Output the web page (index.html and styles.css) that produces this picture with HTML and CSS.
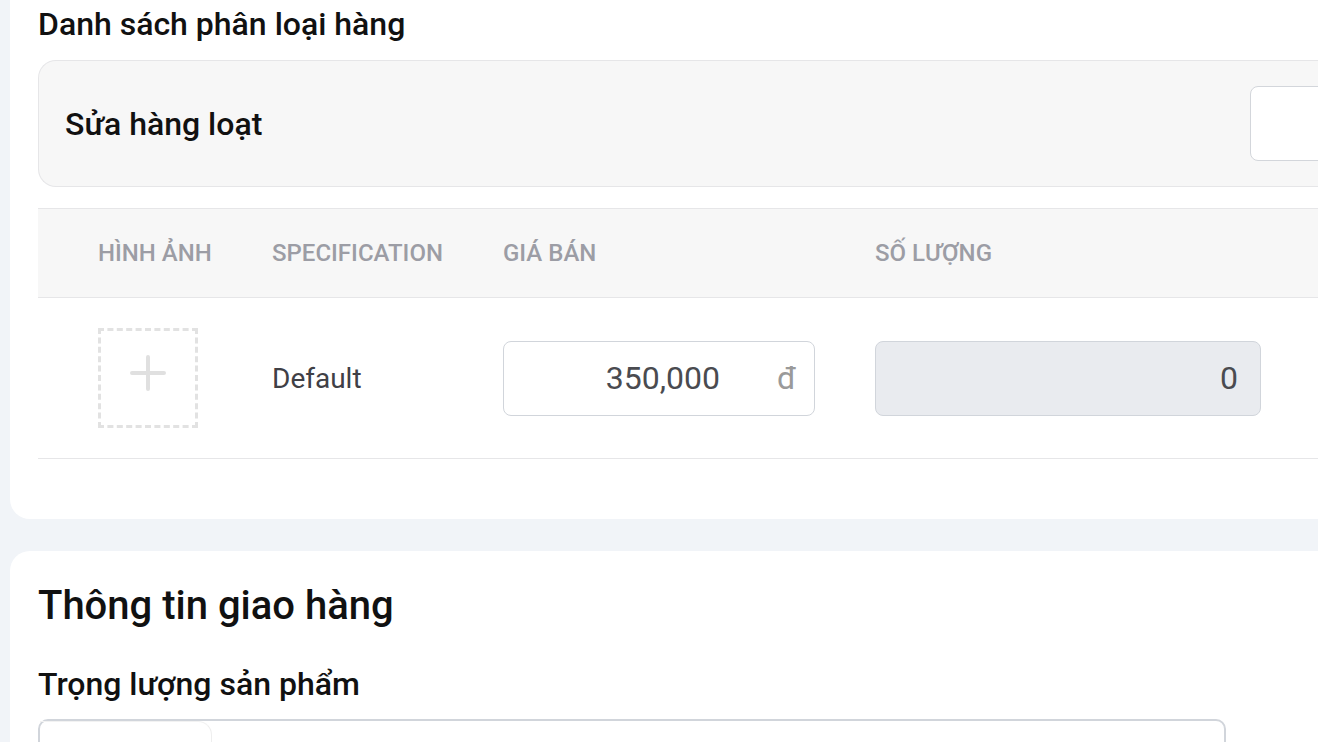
FILE: index.html
```html
<!DOCTYPE html>
<html lang="vi">
<head>
<meta charset="utf-8">
<link rel="stylesheet" href="styles.css">
</head>
<body>
<div class="page">
  <section class="card card-top">
    <h2 class="section-label">Danh sách phân loại hàng</h2>
    <div class="bulk">
      <span class="bulk-title">Sửa hàng loạt</span>
      <div class="bulk-input"></div>
    </div>
    <div class="table">
      <div class="row head">
        <div class="cell c1">HÌNH ẢNH</div>
        <div class="cell">SPECIFICATION</div>
        <div class="cell">GIÁ BÁN</div>
        <div class="cell">SỐ LƯỢNG</div>
        <div class="cell"></div>
      </div>
      <div class="row body">
        <div class="cell c1">
          <div class="img-slot">
            <svg width="36" height="36" viewBox="0 0 36 36"><path d="M18 2v32M2 18h32" stroke="#e0e0e0" stroke-width="4" stroke-linecap="round" fill="none"/></svg>
          </div>
        </div>
        <div class="cell spec">Default</div>
        <div class="cell">
          <div class="field price"><span class="val">350,000</span><span class="unit">đ</span></div>
        </div>
        <div class="cell">
          <div class="field qty"><span class="val">0</span></div>
        </div>
        <div class="cell"></div>
      </div>
    </div>
  </section>
  <section class="card card-bottom">
    <h1 class="card-title">Thông tin giao hàng</h1>
    <h3 class="field-label">Trọng lượng sản phẩm</h3>
    <div class="weight-input"><div class="weight-unit"></div></div>
  </section>
</div>
</body>
</html>
```

FILE: styles.css
```css
* { box-sizing: border-box; }
html, body { margin: 0; padding: 0; }
body {
  background: #f1f4f8;
  font-family: Roboto, "Noto Sans", Arial, sans-serif;
  overflow: hidden;
  width: 1318px;
  height: 742px;
}
.page {
  padding-left: 10px;
  width: 1420px;
}
.card {
  background: #ffffff;
}
.card-top {
  border-radius: 0 0 0 20px;
  padding: 4px 0 60px 28px;
}
.section-label {
  margin: 0;
  font-size: 32px;
  line-height: 40px;
  font-weight: 500;
  color: #111111;
}
.bulk {
  margin-top: 16px;
  height: 127px;
  background: #f7f7f7;
  border: 1.5px solid #e6e6e8;
  border-right: none;
  border-radius: 18px 0 0 18px;
  display: flex;
  align-items: center;
  padding-left: 26px;
}
.bulk-title {
  flex: 1;
  font-size: 32px;
  font-weight: 500;
  color: #111111;
}
.bulk-input {
  width: 170px;
  height: 75px;
  background: #fff;
  border: 1.5px solid #d3d6db;
  border-radius: 8px;
}
.table {
  margin-top: 21px;
}
.row {
  display: grid;
  grid-template-columns: 234px 231px 372px 385px 1fr;
  align-items: center;
}
.row.head {
  height: 90px;
  background: #f7f7f7;
  border-top: 1.5px solid #e6e6e8;
  border-bottom: 1.5px solid #e6e6e8;
}
.head .cell {
  font-size: 24px;
  font-weight: 500;
  color: #9c9da5;
}
.c1 { padding-left: 60px; }
.row.body {
  padding: 30px 0;
  border-bottom: 1.5px solid #e6e6e8;
}
.img-slot {
  width: 100px;
  height: 100px;
  border: 3px dashed #e2e2e2;
  display: flex;
  align-items: center;
  justify-content: center;
}
.img-slot svg { margin-top: -10px; }
.spec {
  font-size: 28px;
  color: #3f4046;
}
.field {
  height: 75px;
  border: 1.5px solid #d1d5db;
  border-radius: 8px;
  display: flex;
  align-items: center;
  justify-content: flex-end;
  font-size: 32px;
  color: #4a4b50;
}
.price {
  width: 312px;
  background: #fff;
  padding-right: 18px;
}
.price .unit {
  color: #9a9a9a;
  margin-left: 57px;
}
.qty {
  width: 386px;
  background: #e9ebef;
  padding-right: 22px;
}
.card-bottom {
  margin-top: 32px;
  border-radius: 20px 0 0 0;
  padding: 31px 0 0 28px;
  height: 400px;
}
.card-title {
  margin: 0;
  font-size: 40px;
  line-height: 48px;
  font-weight: 500;
  color: #111111;
}
.field-label {
  margin: 35px 0 0;
  font-size: 32px;
  line-height: 38px;
  font-weight: 500;
  color: #111111;
}
.weight-input {
  margin-top: 16px;
  width: 1188px;
  height: 75px;
  border: 2px solid #d1d5db;
  border-radius: 10px;
  display: flex;
}
.weight-unit {
  width: 172px;
  border-top: 1.5px solid #f2f2f2;
  border-right: 1.5px solid #eeeeee;
  border-radius: 0 14px 0 0;
}
```
